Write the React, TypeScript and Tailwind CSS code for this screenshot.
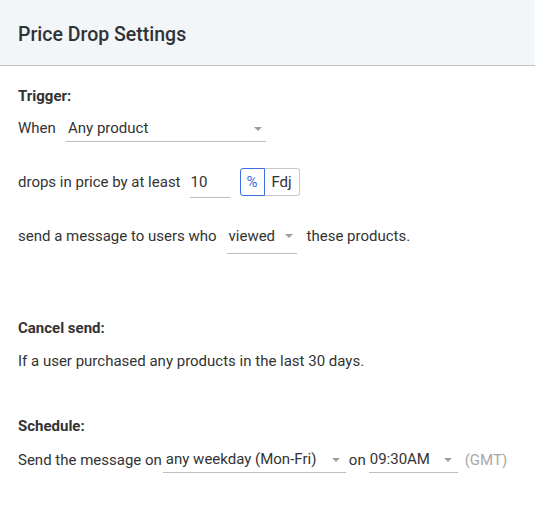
import React from 'react';

const Arrow = () => (
  <svg width="8" height="4" viewBox="0 0 8 4" className="shrink-0">
    <path d="M0 0 L8 0 L4 4 Z" fill="#9e9e9e" />
  </svg>
);

const Select = ({ value, className = '' }: { value: string; className?: string }) => (
  <div className={`flex items-center justify-between border-b border-[#bdbdbd] ${className}`}>
    <span>{value}</span>
    <Arrow />
  </div>
);

export default function App() {
  return (
    <div className="w-[535px] h-[510px] bg-white text-[15px] text-[#333]" style={{ fontFamily: 'Roboto, "Liberation Sans", sans-serif' }}>
      {/* header */}
      <div className="h-[66px] bg-[#f3f6f9] border-b border-[#c2c4c6] flex items-center px-[18px]">
        <h1 className="text-[19.5px] font-medium text-[#2f3237] leading-none mt-[4px]">Price Drop Settings</h1>
      </div>

      <div className="px-[18px] pt-[20px]">
        {/* Trigger */}
        <div className="font-bold leading-5">Trigger:</div>

        <div className="mt-2 flex items-center h-[28px]">
          <span className="w-[48px]">When</span>
          <Select value="Any product" className="w-[200px] h-[28px] pt-[2px] pl-[2px] pr-[4px]" />
        </div>

        <div className="mt-[26px] flex items-start h-[30px]">
          <span className="leading-[28px]">drops in price by at least</span>
          <div className="ml-[9px] w-[40px] h-[30px] border-b border-[#bdbdbd] leading-[28px] pl-[1px]">10</div>
          <div className="ml-[10px] flex h-[28px]">
            <div className="w-[25px] flex items-center justify-center border border-[#3d6ee8] text-[#3d6ee8] rounded-l-[3px]">%</div>
            <div className="w-[35px] flex items-center justify-center border border-l-0 border-[#c8c8c8] rounded-r-[3px]">Fdj</div>
          </div>
        </div>

        <div className="mt-[24px] flex items-start h-[32px]">
          <span className="leading-[28px]">send a message to users who</span>
          <Select value="viewed" className="ml-[10px] w-[70px] h-[32px] pl-[2px] pr-[4px] items-start leading-[28px] [&>svg]:mt-[12px]" />
          <span className="ml-[10px] leading-[28px]">these products.</span>
        </div>

        {/* Cancel send */}
        <div className="mt-[64px] font-bold leading-5">Cancel send:</div>
        <div className="mt-[13px] leading-5">If a user purchased any products in the last 30 days.</div>

        {/* Schedule */}
        <div className="mt-[45px] font-bold leading-5">Schedule:</div>
        <div className="mt-[11px] flex items-center h-[26px]">
          <span>Send the message on</span>
          <Select value="any weekday (Mon-Fri)" className="ml-[1px] w-[183px] h-[26px] pl-[3px] pr-[6px]" />
          <span className="ml-[3px]">on</span>
          <Select value="09:30AM" className="ml-[3px] w-[89px] h-[26px] pl-[1px] pr-[6px]" />
          <span className="ml-[7px] text-[#a8a8a8]">(GMT)</span>
        </div>
      </div>
    </div>
  );
}
